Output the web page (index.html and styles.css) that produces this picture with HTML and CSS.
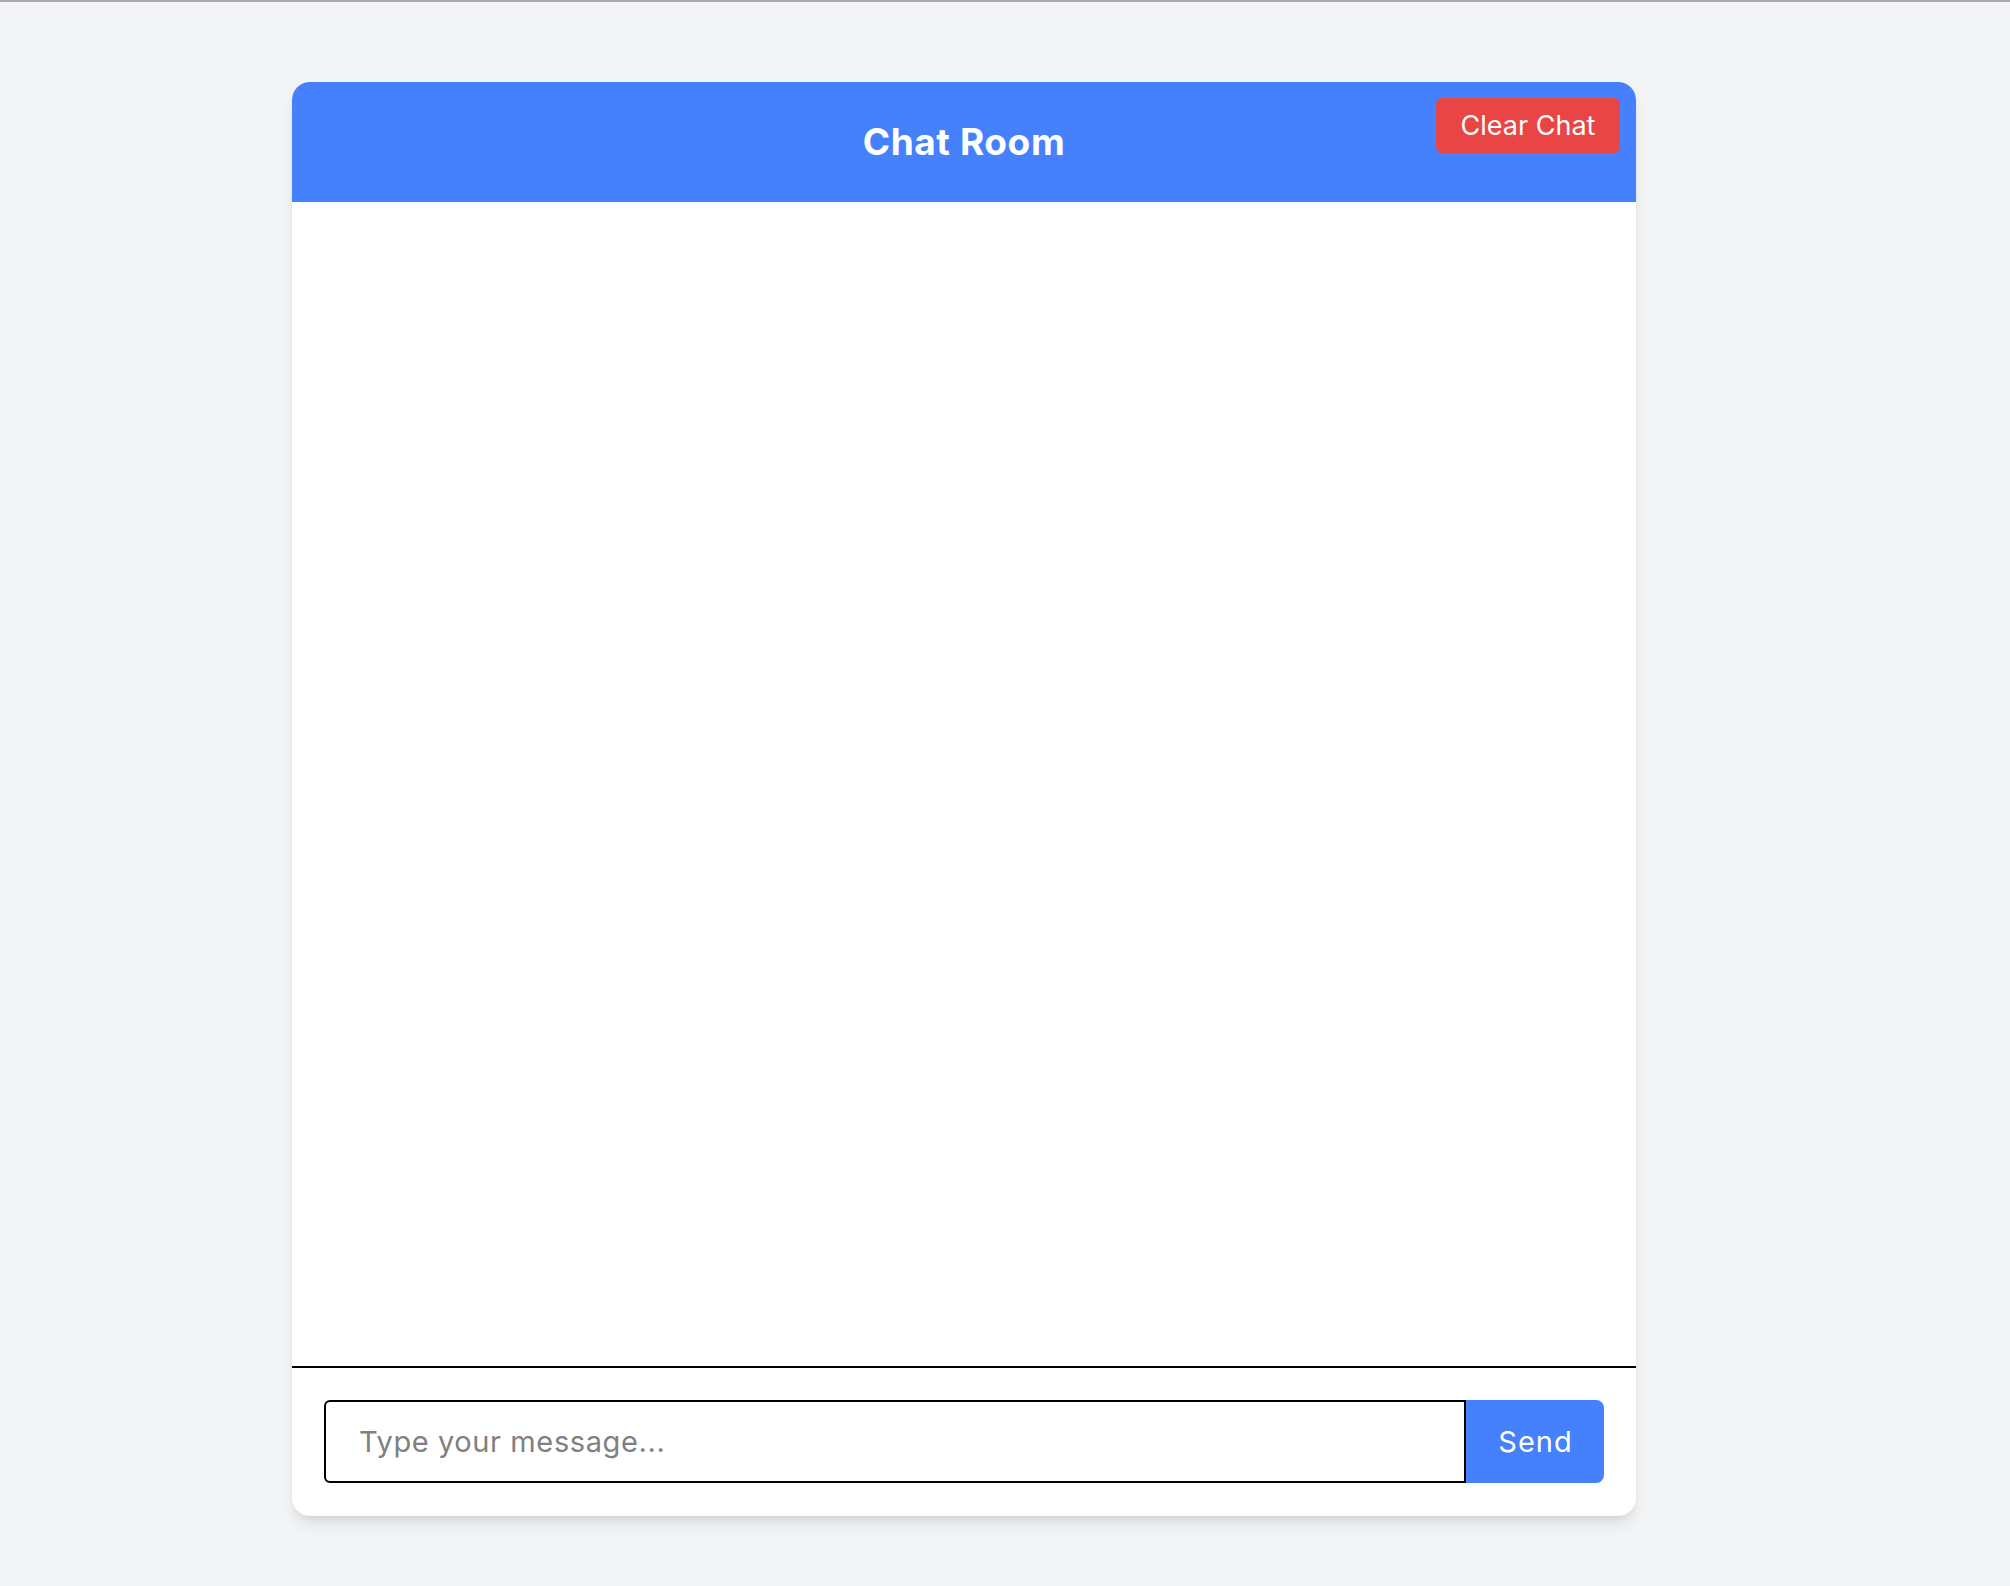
FILE: index.html
```html
<!DOCTYPE html>
<html lang="en">
<head>
<meta charset="utf-8">
<title>Chat Room</title>
<link rel="stylesheet" href="styles.css">
</head>
<body>
<div class="page">
  <div class="card">
    <div class="header">
      <h1 class="title">Chat Room</h1>
      <button class="clear-btn">Clear Chat</button>
    </div>
    <div class="messages"></div>
    <div class="composer">
      <input class="msg-input" type="text" placeholder="Type your message...">
      <button class="send-btn">Send</button>
    </div>
  </div>
</div>
</body>
</html>
```
FILE: styles.css
```css
html, body {
  margin: 0;
  padding: 0;
}
body {
  background: #f3f4f6;
  border-top: 2px solid #a9a9ab;
  font-family: Inter, "Liberation Sans", sans-serif;
  min-height: 1584px;
}
.page {
  padding: 80px 0 0 292px;
}
.card {
  width: 1344px;
  background: #ffffff;
  border-radius: 18px;
  overflow: hidden;
  box-shadow: 0 10px 15px -3px rgba(0,0,0,0.1), 0 4px 6px -4px rgba(0,0,0,0.1);
  display: flex;
  flex-direction: column;
}
.header {
  position: relative;
  background: #4580fd;
  height: 120px;
  box-sizing: border-box;
  padding: 36px;
  display: flex;
  justify-content: center;
  align-items: center;
}
.title {
  margin: 0;
  color: #ffffff;
  font-size: 37px;
  line-height: 48px;
  font-weight: 700;
  letter-spacing: 0.6px;
}
.clear-btn {
  position: absolute;
  top: 16px;
  right: 16px;
  width: 184px;
  height: 55px;
  border: none;
  border-radius: 6px;
  background: #e84544;
  color: #ffffff;
  font-family: Inter, "Liberation Sans", sans-serif;
  font-size: 27px;
  padding: 0;
}
.messages {
  height: 1164px;
  background: #ffffff;
}
.composer {
  border-top: 2px solid #000000;
  padding: 32px 32px 33px 32px;
  display: flex;
}
.msg-input {
  flex: 1;
  height: 83px;
  box-sizing: border-box;
  border: 2px solid #000000;
  border-radius: 6px 0 0 6px;
  padding: 0 0 0 33px;
  font-family: Inter, "Liberation Sans", sans-serif;
  font-size: 29px;
  letter-spacing: 0.6px;
  color: #111;
  outline: none;
  margin: 0;
}
.msg-input::placeholder {
  color: #808080;
}
.send-btn {
  width: 138px;
  height: 83px;
  border: none;
  border-radius: 0 8px 8px 0;
  background: #4580fd;
  color: #ffffff;
  font-family: Inter, "Liberation Sans", sans-serif;
  font-size: 29px;
  letter-spacing: 1px;
  padding: 0 0 0 1px;
  margin: 0;
}
```
